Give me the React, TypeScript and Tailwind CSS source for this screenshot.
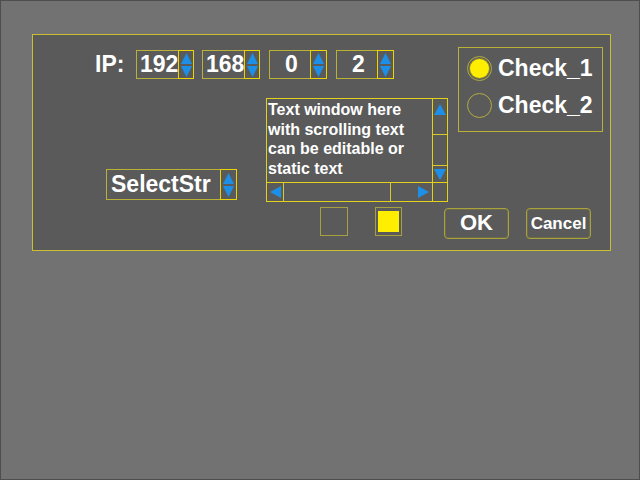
import React from "react";

const font = { fontFamily: '"Liberation Sans", Arial, sans-serif' };

function Spinner({ className = "" }: { className?: string }) {
  return (
    <div className={`w-[17px] self-stretch -my-px -mr-px border border-[#ecd400] flex items-center justify-center ${className}`}>
      <svg width="13" height="26" viewBox="0 0 13 26">
        <path d="M6.5 1 L12 12 L1 12 Z" fill="#1e8fe6" />
        <path d="M1 14 L12 14 L6.5 25 Z" fill="#1e8fe6" />
      </svg>
    </div>
  );
}

function IpField({ value, ml }: { value: string; ml: string }) {
  return (
    <div className={`${ml} w-[58px] h-[29px] border border-[#b9b236] flex items-center`}>
      <span className="flex-1 pl-[3px] text-center text-white font-bold text-[23px] leading-none">{value}</span>
      <Spinner />
    </div>
  );
}

function Tri({ dir }: { dir: "up" | "down" | "left" | "right" }) {
  const d = {
    up: "M6 0 L12 11 L0 11 Z",
    down: "M0 0 L12 0 L6 11 Z",
    left: "M0 6 L11 0 L11 12 Z",
    right: "M0 0 L11 6 L0 12 Z",
  }[dir];
  const vert = dir === "up" || dir === "down";
  return (
    <svg width={vert ? 12 : 11} height={vert ? 11 : 12} viewBox={vert ? "0 0 12 11" : "0 0 11 12"}>
      <path d={d} fill="#1e8fe6" />
    </svg>
  );
}

function TextWindow() {
  return (
    <div className="ml-[29px] w-[182px] h-[104px] border border-[#e2d21a] grid grid-cols-[1fr_15px] grid-rows-[1fr_19px]">
      <div className="pl-[1px] pt-[1px] text-white font-bold text-[16px] leading-[19.5px] whitespace-pre overflow-hidden">
        {"Text window here\nwith scrolling text\ncan be editable or\nstatic text"}
      </div>
      <div className="border-l border-[#e2d21a] flex flex-col">
        <div className="h-[36px] border-b border-[#d8ca2a] flex justify-center pt-[5px]">
          <Tri dir="up" />
        </div>
        <div className="h-[31px] border-b border-[#d8ca2a]" />
        <div className="flex-1 flex justify-center items-end pb-[2px]">
          <Tri dir="down" />
        </div>
      </div>
      <div className="border-t border-[#e2d21a] flex">
        <div className="w-[17px] border-r border-[#d8ca2a] flex items-center justify-center">
          <Tri dir="left" />
        </div>
        <div className="w-[107px] border-r border-[#d8ca2a]" />
        <div className="flex-1 flex items-center justify-end pr-[3px]">
          <Tri dir="right" />
        </div>
      </div>
      <div className="border-t border-l border-[#e2d21a]" />
    </div>
  );
}

function Radio({ checked, label }: { checked?: boolean; label: string }) {
  return (
    <div className="flex items-center h-[25px]">
      <div className="w-[25px] h-[25px] rounded-full border border-[#b3ac44] flex items-center justify-center">
        {checked && <div className="w-[19px] h-[19px] rounded-full bg-[#ffee00] shadow-[0_0_0_1px_#8c8636]" />}
      </div>
      <span className="ml-[6px] text-white font-bold text-[23px] leading-none">{label}</span>
    </div>
  );
}

export default function App() {
  return (
    <div style={font} className="w-[640px] h-[480px] bg-[#727272] border border-[#4e4e4e] overflow-hidden">
      <div className="ml-[31px] mt-[33px] w-[579px] h-[217px] border border-[#c8c030] bg-[#5a5a5a] flex flex-col">
        <div className="flex items-start">
          <div className="flex flex-col">
            <div className="mt-[15px] flex items-center pl-[62px]">
              <span className="w-[41px] text-white font-bold text-[23px] leading-none">IP:</span>
              <IpField value="192" ml="" />
              <IpField value="168" ml="ml-[8px]" />
              <IpField value="0" ml="ml-[9px]" />
              <IpField value="2" ml="ml-[9px]" />
            </div>
            <div className="mt-[19px] flex items-start">
              <div className="ml-[73px] mt-[71px] w-[131px] h-[31px] border border-[#b9b236] flex items-center">
                <span className="flex-1 pl-[4px] text-white font-bold text-[23px] leading-none">SelectStr</span>
                <Spinner />
              </div>
              <TextWindow />
            </div>
          </div>
          <div className="ml-[10px] mt-[12px] w-[145px] h-[85px] border border-[#b9b236] pl-[8px] pt-[8px] flex flex-col gap-[12px]">
            <Radio checked label="Check_1" />
            <Radio label="Check_2" />
          </div>
        </div>
        <div className="mt-[5px] flex items-start">
          <div className="ml-[287px] w-[28px] h-[29px] border border-[#a7a040]" />
          <div className="ml-[27px] w-[27px] h-[29px] border border-[#a7a040] flex items-center justify-center">
            <div className="w-[21px] h-[21px] bg-[#ffee00]" />
          </div>
          <button className="ml-[42px] mt-[1px] w-[65px] h-[31px] rounded-[4px] border border-[#aaa33c] shadow-[inset_0_0_0_1px_#6b6a4a] text-white font-bold text-[22px] leading-none flex items-center justify-center pb-[2px]">
            OK
          </button>
          <button className="ml-[17px] mt-[1px] w-[65px] h-[31px] rounded-[4px] border border-[#aaa33c] shadow-[inset_0_0_0_1px_#6b6a4a] text-white font-bold text-[17px] leading-none flex items-center justify-center">
            Cancel
          </button>
        </div>
      </div>
    </div>
  );
}
